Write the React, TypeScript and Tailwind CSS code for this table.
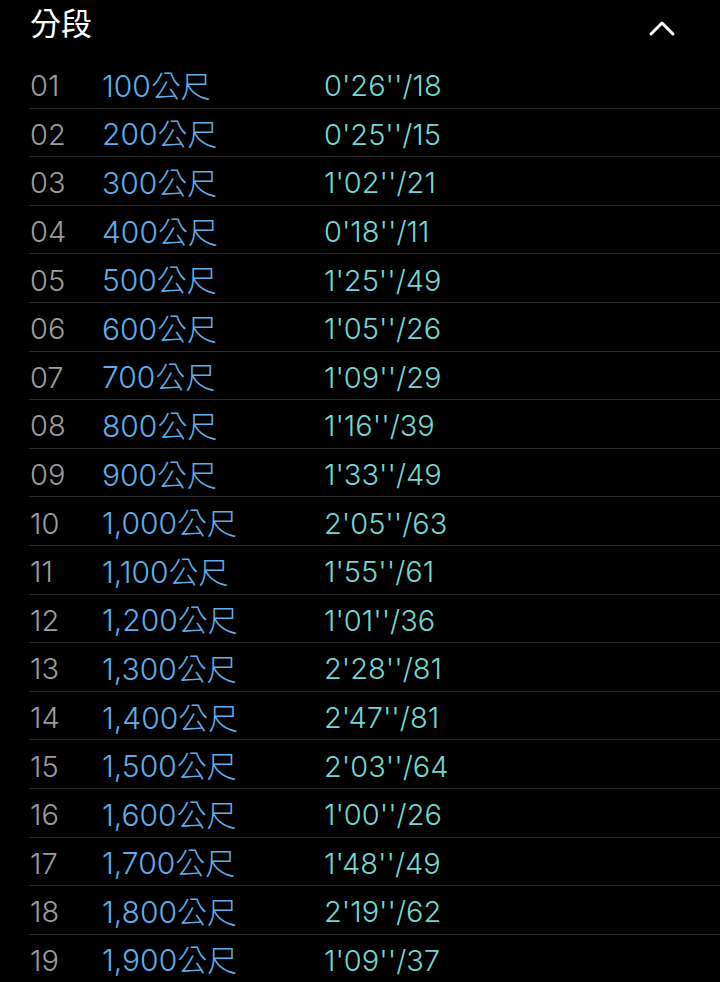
const SPLITS: [string, string][] = [
  ["100", "0'26''/18"],
  ["200", "0'25''/15"],
  ["300", "1'02''/21"],
  ["400", "0'18''/11"],
  ["500", "1'25''/49"],
  ["600", "1'05''/26"],
  ["700", "1'09''/29"],
  ["800", "1'16''/39"],
  ["900", "1'33''/49"],
  ["1,000", "2'05''/63"],
  ["1,100", "1'55''/61"],
  ["1,200", "1'01''/36"],
  ["1,300", "2'28''/81"],
  ["1,400", "2'47''/81"],
  ["1,500", "2'03''/64"],
  ["1,600", "1'00''/26"],
  ["1,700", "1'48''/49"],
  ["1,800", "2'19''/62"],
  ["1,900", "1'09''/37"],
];

const FONT = { fontFamily: 'Inter, "Noto Sans CJK TC", sans-serif' };

export default function App() {
  return (
    <div className="h-[982px] w-[720px] overflow-hidden bg-black" style={FONT}>
      <div className="flex h-[60px] items-start justify-between pl-[30px] pr-[44px]">
        <div className="pt-[5px] text-[31px] leading-[38px] text-white">分段</div>
        <svg width="28" height="20" viewBox="0 0 28 20" className="mt-[18px]">
          <path d="M3 16 L14 5 L25 16" fill="none" stroke="#fff" strokeWidth="3" strokeLinecap="round" strokeLinejoin="round" />
        </svg>
      </div>
      <div className="ml-[29px]">
        {SPLITS.map(([dist, pace], i) => (
          <div
            key={i}
            className="flex h-[48.6px] items-center border-b border-[#2a2a2c] pt-[4px] text-[29px] font-light leading-none"
          >
            <div className="w-[73px] pl-[1px] text-[#9c9ca0]">{String(i + 1).padStart(2, "0")}</div>
            <div className="w-[222px] text-[30px] text-[#5eaeea]">{dist}公尺</div>
            <div className="text-[#73d8d4]">{pace}</div>
          </div>
        ))}
      </div>
    </div>
  );
}
